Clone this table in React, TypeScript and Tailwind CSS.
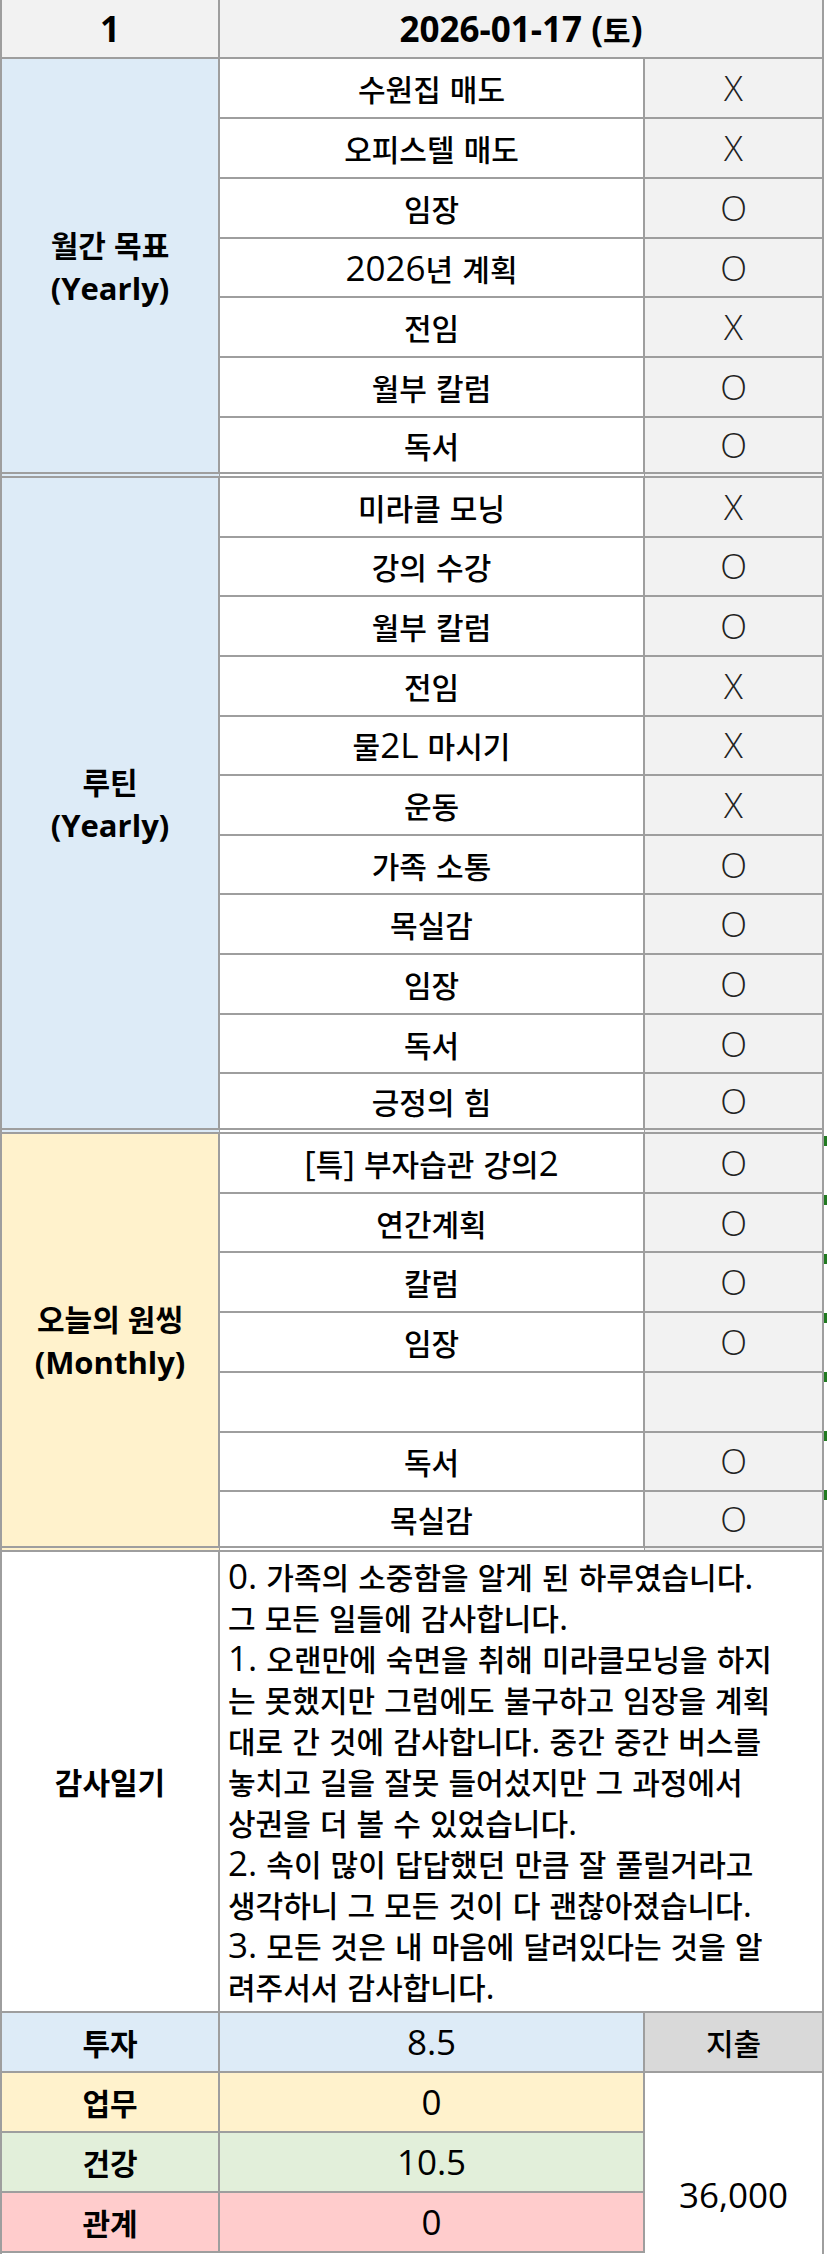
import React from 'react';

// Latin / digits run a little larger than hangul, like Malgun Gothic in Excel
const HANGUL = /([\uAC00-\uD7A3\u3131-\u318E]+)/;

const Txt = ({ text, latin = 'text-[35px]' }: { text: string; latin?: string }) => (
  <span>
    {text
      .split(HANGUL)
      .filter((part) => part !== '')
      .map((part, i) =>
        HANGUL.test(part) ? (
          <span key={i}>{part}</span>
        ) : (
          <span key={i} className={`font-['Open_Sans','Noto_Sans_CJK_KR',sans-serif] leading-none ${latin}`}>
            {part}
          </span>
        )
      )}
  </span>
);

type Section = {
  label: string[];
  bg: string;
  height: string;
  rows: [string, string][];
};

const sections: Section[] = [
  {
    label: ['월간 목표', '(Yearly)'],
    bg: 'bg-[#ddebf7]',
    height: 'h-[419px]',
    rows: [
      ['수원집 매도', 'X'],
      ['오피스텔 매도', 'X'],
      ['임장', 'O'],
      ['2026년 계획', 'O'],
      ['전임', 'X'],
      ['월부 칼럼', 'O'],
      ['독서', 'O'],
    ],
  },
  {
    label: ['루틴', '(Yearly)'],
    bg: 'bg-[#ddebf7]',
    height: 'h-[656px]',
    rows: [
      ['미라클 모닝', 'X'],
      ['강의 수강', 'O'],
      ['월부 칼럼', 'O'],
      ['전임', 'X'],
      ['물2L 마시기', 'X'],
      ['운동', 'X'],
      ['가족 소통', 'O'],
      ['목실감', 'O'],
      ['임장', 'O'],
      ['독서', 'O'],
      ['긍정의 힘', 'O'],
    ],
  },
  {
    label: ['오늘의 원씽', '(Monthly)'],
    bg: 'bg-[#fff2cc]',
    height: 'h-[418px]',
    rows: [
      ['[특] 부자습관 강의2', 'O'],
      ['연간계획', 'O'],
      ['칼럼', 'O'],
      ['임장', 'O'],
      ['', ''],
      ['독서', 'O'],
      ['목실감', 'O'],
    ],
  },
];

const diary = [
  '0. 가족의 소중함을 알게 된 하루였습니다.',
  '그 모든 일들에 감사합니다.',
  '1. 오랜만에 숙면을 취해 미라클모닝을 하지',
  '는 못했지만 그럼에도 불구하고 임장을 계획',
  '대로 간 것에 감사합니다. 중간 중간 버스를',
  '놓치고 길을 잘못 들어섰지만 그 과정에서',
  '상권을 더 볼 수 있었습니다.',
  '2. 속이 많이 답답했던 만큼 잘 풀릴거라고',
  '생각하니 그 모든 것이 다 괜찮아졌습니다.',
  '3. 모든 것은 내 마음에 달려있다는 것을 알',
  '려주서서 감사합니다.',
];

const scores = [
  { label: '투자', value: '8.5', bg: 'bg-[#ddebf7]' },
  { label: '업무', value: '0', bg: 'bg-[#fff2cc]' },
  { label: '건강', value: '10.5', bg: 'bg-[#e2efda]' },
  { label: '관계', value: '0', bg: 'bg-[#ffcccc]' },
];

const App = () => {
  return (
    <div className="w-[827px] h-[2254px] bg-white flex font-['Noto_Sans_CJK_KR',sans-serif] font-medium text-[30px] text-black overflow-hidden">
      {/* Sheet */}
      <div className="w-[824px] shrink-0 border-x-2 border-[#9e9e9e] flex flex-col">
        {/* Header */}
        <div className="h-[59px] shrink-0 flex border-b-2 border-[#9e9e9e] bg-[#f2f2f2] font-bold leading-[40px]">
          <div className="w-[218px] shrink-0 border-r-2 border-[#9e9e9e] flex items-center justify-center">
            <Txt text="1" latin="text-[35px] font-bold" />
          </div>
          <div className="flex-1 flex items-center justify-center">
            <Txt text="2026-01-17 (토)" latin="text-[35px] font-bold" />
          </div>
        </div>

        {/* Goal sections */}
        {sections.map((section, si) => (
          <div key={si} className={`${section.height} shrink-0 flex`}>
            <div
              className={`w-[218px] shrink-0 border-r-2 border-b-[6px] border-double border-[#9e9e9e] ${section.bg} flex flex-col items-center justify-center font-bold leading-[43px]`}
            >
              {section.label.map((line) => (
                <div key={line}>
                  <Txt text={line} latin="text-[31px] font-bold" />
                </div>
              ))}
            </div>
            <div className="flex-1 flex flex-col">
              {section.rows.map(([task, done], ri) => {
                const last = ri === section.rows.length - 1;
                const bottom = last ? 'border-b-[6px] border-double' : 'border-b-2';
                return (
                  <div key={ri} className="flex-1 flex leading-[40px]">
                    <div
                      className={`w-[425px] shrink-0 border-r-2 ${bottom} border-[#9e9e9e] bg-white flex items-center justify-center whitespace-nowrap`}
                    >
                      <Txt text={task} />
                    </div>
                    <div
                      className={`flex-1 ${bottom} border-[#9e9e9e] bg-[#f2f2f2] flex items-center justify-center font-['Open_Sans',sans-serif] font-light text-[35px] text-[#222]`}
                    >
                      {done}
                    </div>
                  </div>
                );
              })}
            </div>
          </div>
        ))}

        {/* Gratitude diary */}
        <div className="h-[461px] shrink-0 flex">
          <div className="w-[218px] shrink-0 border-r-2 border-b-2 border-[#9e9e9e] flex items-center justify-center font-bold">
            감사일기
          </div>
          <div className="flex-1 border-b-2 border-[#9e9e9e] px-[8px] pt-[4px] leading-[41px]">
            {diary.map((line, i) => (
              <div key={i} className="h-[41px] whitespace-nowrap">
                <Txt text={line} />
              </div>
            ))}
          </div>
        </div>

        {/* Scores */}
        <div className="flex-1 flex">
          <div className="w-[643px] shrink-0 flex flex-col">
            {scores.map((s) => (
              <div key={s.label} className={`h-[60px] shrink-0 flex border-b-2 border-[#9e9e9e] ${s.bg} leading-[40px]`}>
                <div className="w-[218px] shrink-0 border-r-2 border-[#9e9e9e] flex items-center justify-center font-bold">
                  {s.label}
                </div>
                <div className="w-[425px] shrink-0 border-r-2 border-[#9e9e9e] flex items-center justify-center">
                  <Txt text={s.value} />
                </div>
              </div>
            ))}
          </div>
          <div className="flex-1 flex flex-col">
            <div className="h-[60px] shrink-0 border-b-2 border-[#9e9e9e] bg-[#d9d9d9] flex items-center justify-center">
              지출
            </div>
            <div className="flex-1 pt-[102px] text-center leading-[40px]">
              <Txt text="36,000" />
            </div>
          </div>
        </div>
      </div>

      {/* Neighbouring column: error markers */}
      <div className="flex-1 flex flex-col pt-[1136px]">
        {Array.from({ length: 7 }).map((_, i) => (
          <div key={i} className="h-[59px] shrink-0">
            <div className="h-[10px] w-[3px] bg-[#217a21]" />
          </div>
        ))}
      </div>
    </div>
  );
};

export default App;
